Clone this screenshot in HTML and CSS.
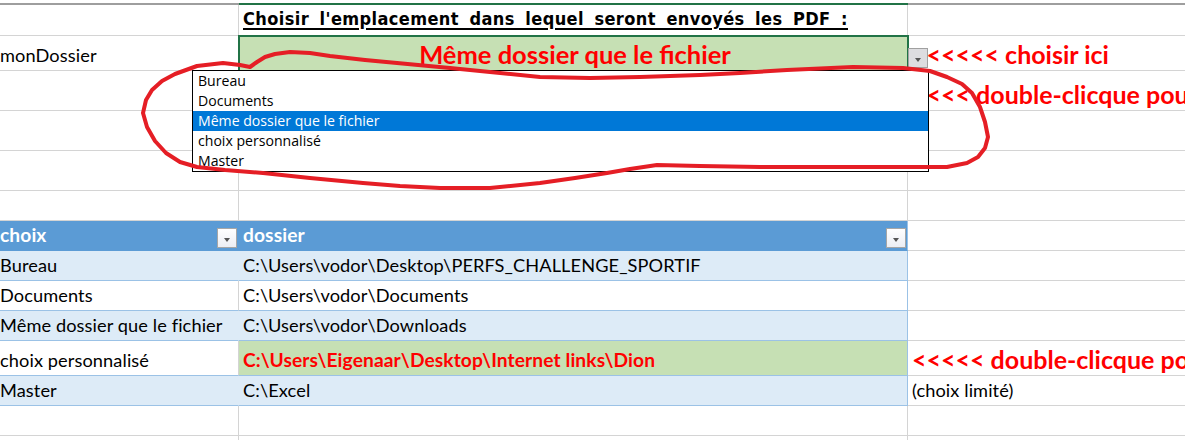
FILE: index.html
```html
<!DOCTYPE html>
<html lang="fr">
<head>
    <meta charset="UTF-8">
    <title>Emplacement PDF</title>
    <link rel="stylesheet" href="styles.css">
</head>
<body>
<div class="sheet">
    <div class="colhead">
        <div class="hd"></div>
        <div class="hd sel"></div>
        <div class="hd"></div>
    </div>

    <div class="row r31">
        <div class="cell a"></div>
        <div class="cell b"><span class="title">Choisir l'emplacement dans lequel seront envoyés les PDF :</span></div>
        <div class="cell c"></div>
    </div>
    <div class="row r35">
        <div class="cell a">monDossier</div>
        <div class="cell b pick">Même dossier que le fichier</div>
        <div class="cell c note shift">&lt;&lt;&lt;&lt;&lt;&lt; choisir ici</div>
    </div>
    <div class="row r40">
        <div class="cell a"></div>
        <div class="cell b"></div>
        <div class="cell c note shift">&lt;&lt;&lt;&lt; double-clicque pour choisir</div>
    </div>
    <div class="row r40">
        <div class="cell a"></div>
        <div class="cell b"></div>
        <div class="cell c"></div>
    </div>
    <div class="row r40">
        <div class="cell a"></div>
        <div class="cell b"></div>
        <div class="cell c"></div>
    </div>
    <div class="row r30">
        <div class="cell a"></div>
        <div class="cell b"></div>
        <div class="cell c"></div>
    </div>

    <!-- tableau des dossiers -->
    <div class="row r30">
        <div class="cell a th">choix<span class="filter"></span></div>
        <div class="cell b th tlast">dossier<span class="filter"></span></div>
        <div class="cell c"></div>
    </div>
    <div class="row r30">
        <div class="cell a band">Bureau</div>
        <div class="cell b band tlast">C:\Users\vodor\Desktop\PERFS_CHALLENGE_SPORTIF</div>
        <div class="cell c"></div>
    </div>
    <div class="row r30">
        <div class="cell a plain">Documents</div>
        <div class="cell b plain tlast">C:\Users\vodor\Documents</div>
        <div class="cell c"></div>
    </div>
    <div class="row r30">
        <div class="cell a band">Même dossier que le fichier</div>
        <div class="cell b band tlast">C:\Users\vodor\Downloads</div>
        <div class="cell c"></div>
    </div>
    <div class="row r35">
        <div class="cell a plain">choix personnalisé</div>
        <div class="cell b custom tlast">C:\Users\Eigenaar\Desktop\Internet links\Dion</div>
        <div class="cell c note">&lt;&lt;&lt;&lt;&lt; double-clicque pour choisir</div>
    </div>
    <div class="row r30">
        <div class="cell a band">Master</div>
        <div class="cell b band tlast">C:\Excel</div>
        <div class="cell c">(choix limité)</div>
    </div>
    <div class="row r30">
        <div class="cell a"></div>
        <div class="cell b"></div>
        <div class="cell c"></div>
    </div>
    <div class="row r30">
        <div class="cell a"></div>
        <div class="cell b"></div>
        <div class="cell c"></div>
    </div>

    <!-- liste déroulante ouverte -->
    <div class="dropbtn"><span class="tri"></span></div>
    <ul class="droplist">
        <li>Bureau</li>
        <li>Documents</li>
        <li class="on">Même dossier que le fichier</li>
        <li>choix personnalisé</li>
        <li>Master</li>
    </ul>

    <svg class="scribble" width="1185" height="440" viewBox="0 0 1185 440">
        <path d="M250 67 L257 62 L265 57 L275 54 L290 52 L310 53 L330 56 L365 60 L397 63 L450 68 L490 72 L540 77 L590 78 L640 77 L700 75 L740 73 L787 70 L853 67 L903 68 L930 71 L947 77 L962 84 L972 93 L980 107 L985 122 L988 137 L985 148 L978 157 L967 163 L947 167 L920 167 L880 167 L820 167 L760 167 L700 166 L657 165 L630 169 L607 173 L575 178 L540 183 L490 188 L440 188 L400 186 L363 183 L310 178 L263 173 L225 170 L197 167 L180 162 L166 153 L155 141 L147 127 L143 113 L146 100 L152 90 L162 81 L175 74 L197 66 L223 63 L240 65 L250 67"/>
    </svg>
</div>
</body>
</html>
```

FILE: styles.css
```css
body {
    margin: 0;
    background: #ffffff;
    font-family: Lato, "Liberation Sans", sans-serif;
    color: #000;
    overflow: hidden;
}
.sheet {
    position: relative;
    width: 1185px;
    height: 440px;
    overflow: hidden;
    padding-top: 3px;
    box-sizing: border-box;
}
.colhead, .row {
    display: grid;
    grid-template-columns: 239px 669px 1fr;
}
.colhead .hd {
    height: 2px;
    background: #9e9e9e;
}
.colhead .sel {
    background: #217346;
}
.r30 { height: 30px; }
.r31 { height: 31px; }
.r35 { height: 35px; }
.r40 { height: 40px; }

.cell {
    position: relative;
    box-sizing: border-box;
    border-right: 1px solid #d4d4d4;
    border-bottom: 1px solid #d4d4d4;
    white-space: nowrap;
    display: flex;
    align-items: flex-end;
    padding-bottom: 4px;
    font-size: 18.2px;
    letter-spacing: 0.1px;
}
.cell.a { padding-left: 0; }
.cell.b { padding-left: 4px; }
.cell.c { padding-left: 4px; border-right: none; }

.title {
    font-family: "DejaVu Sans Condensed", "DejaVu Sans", sans-serif;
    font-weight: bold;
    font-size: 18px;
    letter-spacing: 0.4px;
    word-spacing: 4.5px;
    text-decoration: underline;
    text-decoration-thickness: 2px;
    text-underline-offset: 3px;
    margin-bottom: 2px;
}
.pick {
    background: #c6e0b4;
    justify-content: center;
    color: #ff0000;
    font-weight: bold;
    font-size: 25.5px;
    letter-spacing: 0;
    padding-bottom: 1px;
    outline: 2px solid #217346;
    outline-offset: -1px;
    z-index: 1;
}
.note {
    color: #ff0000;
    font-weight: bold;
    font-size: 25px;
    letter-spacing: 0;
    padding-bottom: 1px;
}
.shift { padding-left: 20px; }

/* tableau */
.th {
    background: #5b9bd5;
    color: #fff;
    font-weight: bold;
    font-size: 19.2px;
    border-bottom-color: #5b9bd5;
    border-right-color: #5b9bd5;
}
.band {
    background: #ddebf7;
    border-bottom-color: #9bc2e6;
    border-right-color: #ddebf7;
}
.plain {
    border-bottom-color: #9bc2e6;
}
.custom {
    background: #c6e0b4;
    color: #ff0000;
    font-weight: bold;
    font-size: 19.2px;
    border-bottom-color: #9bc2e6;
}
.tlast { border-right-color: #9bc2e6; }

.filter {
    position: absolute;
    right: 1px;
    top: 7px;
    width: 20px;
    height: 20px;
    box-sizing: border-box;
    border: 1px solid #a6a6a6;
    background: linear-gradient(#ffffff, #eceef4);
}
.filter::after, .tri {
    content: "";
    position: absolute;
    left: 6px;
    top: 9px;
    border-left: 3px solid transparent;
    border-right: 3px solid transparent;
    border-top: 4px solid #555;
}
.dropbtn {
    position: absolute;
    left: 908px;
    top: 48px;
    width: 20px;
    height: 20px;
    box-sizing: border-box;
    border: 1px solid #a0a0a0;
    background: #dddde0;
    z-index: 2;
}

.droplist {
    position: absolute;
    left: 192px;
    top: 70px;
    width: 737px;
    box-sizing: border-box;
    margin: 0;
    padding: 0;
    list-style: none;
    background: #fff;
    border: 1px solid #000;
    font-family: "Open Sans", sans-serif;
    font-size: 14.1px;
    z-index: 3;
}
.droplist li {
    height: 20px;
    line-height: 20px;
    padding-left: 5px;
}
.droplist li.on {
    background: #0078d7;
    color: #fff;
}

.scribble {
    position: absolute;
    left: 0;
    top: 0;
    z-index: 4;
    pointer-events: none;
}
.scribble path {
    fill: none;
    stroke: #e51e25;
    stroke-width: 4;
    stroke-linejoin: round;
    stroke-linecap: round;
}
```
